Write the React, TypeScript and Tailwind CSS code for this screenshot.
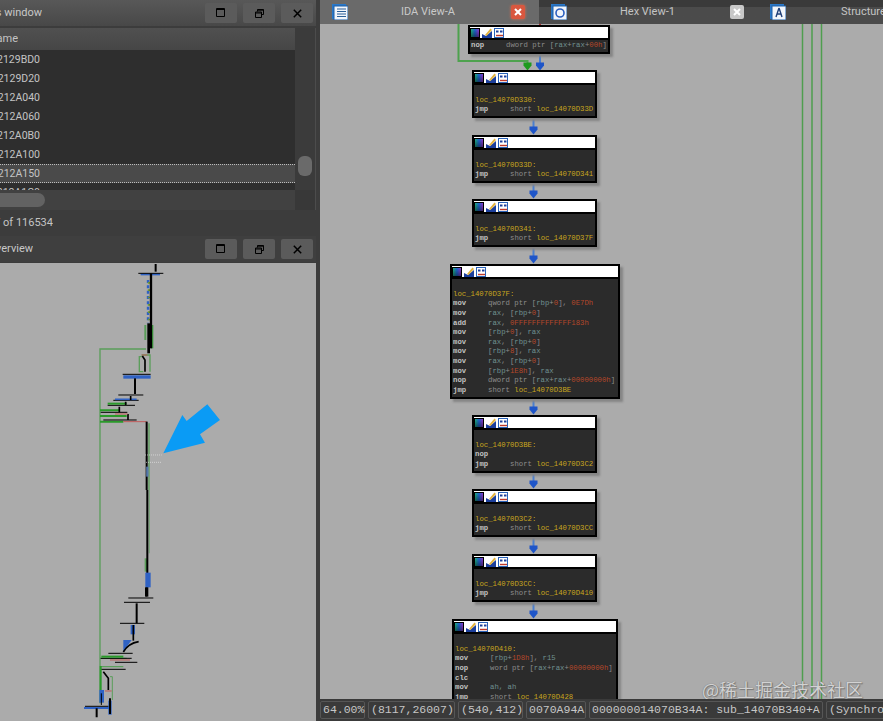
type Seg = [string, string];

const LABEL = "text-[#c9a61e]";
const OP = "text-[#c2c2c2] font-bold";
const GRAY = "text-[#8c8c8c]";
const REG = "text-[#6f9090]";
const NUM = "text-[#b5472a]";

const label = (name: string): Seg[] => [[name, LABEL]];
const jmp = (target: string): Seg[] => [
  ["jmp", OP],
  ["     short ", GRAY],
  [target, LABEL],
];

const mem = (op: string, inner: string, off: string, tail: Seg[]): Seg[] => [
  [op, OP],
  ["     [", GRAY],
  [inner, REG],
  ["+", GRAY],
  [off, NUM],
  ["], ", GRAY],
  ...tail,
];

const loadRax: Seg[] = [
  ["mov", OP],
  ["     ", GRAY],
  ["rax", REG],
  [", [", GRAY],
  ["rbp", REG],
  ["+", GRAY],
  ["0", NUM],
  ["]", GRAY],
];

const blankLine: Seg[] = [[" ", GRAY]];

type BlockProps = {
  lines: Seg[][];
  className: string;
};

const BlockIcons = () => (
  <div className="flex items-center gap-[2px]">
    <svg width="10" height="10" viewBox="0 0 10 10">
      <defs>
        <linearGradient id="rainbow" x1="0" y1="0" x2="1" y2="0">
          <stop offset="0" stopColor="#22d070" />
          <stop offset="0.5" stopColor="#1f6ae0" />
          <stop offset="1" stopColor="#b830d8" />
        </linearGradient>
        <linearGradient id="shade" x1="0" y1="0" x2="0" y2="1">
          <stop offset="0" stopColor="#000" stopOpacity="0" />
          <stop offset="1" stopColor="#000" stopOpacity="0.55" />
        </linearGradient>
      </defs>
      <rect x="0" y="0" width="10" height="10" fill="url(#rainbow)" />
      <rect x="0" y="0" width="10" height="10" fill="url(#shade)" />
      <rect x="0.5" y="0.5" width="9" height="9" fill="none" stroke="#000" />
    </svg>
    <svg width="10" height="10" viewBox="0 0 10 10">
      <path d="M0 10V6L4 8 10 3V10Z" fill="#1c3f9c" />
      <path d="M3 7 8.5 0.5 10 2 4.5 8Z" fill="#e3b23c" />
    </svg>
    <svg width="10" height="10" viewBox="0 0 10 10">
      <rect x="0.5" y="0.5" width="9" height="9" fill="#fff" stroke="#2a62b8" />
      <rect x="2" y="2.5" width="2.5" height="2" fill="#1c3f9c" />
      <rect x="6" y="2.5" width="2.5" height="2" fill="#1c3f9c" />
      <path d="M2 7.5H9" stroke="#c0392b" strokeWidth="1.4" />
    </svg>
  </div>
);

const Block = ({ lines, className }: BlockProps) => (
  <div className={`absolute border-2 border-black bg-[#2b2b2b] shadow-[3px_3px_2px_#858585] ${className}`}>
    <div className="flex h-[11px] items-center bg-white">
      <BlockIcons />
    </div>
    <div className="border-t-2 border-black pb-[1px] pl-[1px] pt-[1px] font-['Liberation_Mono',monospace] text-[7.3px] leading-[9.63px]">
      {lines.map((line, i) => (
        <div key={i} className="h-[9.63px] overflow-hidden whitespace-pre">
          {line.map(([text, color], j) => (
            <span key={j} className={color}>
              {text}
            </span>
          ))}
        </div>
      ))}
    </div>
  </div>
);

const WindowButtons = () => (
  <div className="flex gap-[6px]">
    <button className="flex h-[20px] w-[32px] items-center justify-center rounded-[2px] bg-[#5b5b5b]">
      <svg width="10" height="10" viewBox="0 0 10 10" fill="none" stroke="#000">
        <path d="M.5.5h8v8h-8z" />
        <path d="M.5 1.5h8" />
      </svg>
    </button>
    <button className="flex h-[20px] w-[32px] items-center justify-center rounded-[2px] bg-[#5b5b5b]">
      <svg width="9" height="9" viewBox="0 0 9 9" fill="none" stroke="#000">
        <path d="M2.5 2.5V.5h6v5h-2" />
        <path d="M.5 3h6v5.5h-6z" />
        <path d="M.5 4h6M2.5 1.2h6" />
      </svg>
    </button>
    <button className="flex h-[20px] w-[32px] items-center justify-center rounded-[2px] bg-[#5b5b5b]">
      <svg width="9" height="9" viewBox="0 0 9 9" fill="none" stroke="#000" strokeWidth="1.5">
        <path d="M.8.8l7.4 7.4M8.2.8L.8 8.2" />
      </svg>
    </button>
  </div>
);

const PanelHeader = ({ title, width, bar }: { title: string; width: string; bar: string }) => (
  <div className={`flex h-[26px] shrink-0 items-center justify-between pr-[3px] ${bar}`}>
    <div className={`flex justify-end overflow-hidden whitespace-nowrap text-[11px] text-[#c8c8c8] ${width}`}>
      <span className="shrink-0">{title}</span>
    </div>
    <WindowButtons />
  </div>
);

const rows = ["129BD0", "129D20", "12A040", "12A060", "12A0B0", "12A100", "12A150", "12A1C0"];

const FunctionsTable = () => (
  <div className="relative mt-[2px] h-[182px] w-[316px] shrink-0 overflow-hidden border-r border-[#4c4c4c] bg-[#2e2e2e] text-[10.5px] text-[#c4c4c4]">
    <div className="flex h-[22px] items-center bg-gradient-to-b from-[#505050] to-[#464646]">
      <div className="flex w-[18px] justify-end overflow-hidden whitespace-nowrap text-[11px]">
        <span className="shrink-0">Function name</span>
      </div>
    </div>
    <div className="h-[140px] w-[295px] overflow-hidden">
      {rows.map((row, i) => (
        <div
          key={row}
          className={
            i === 6
              ? "flex h-[19px] w-[295px] items-center border-y border-dotted border-[#bdbdbd] bg-[#4a4a4a]"
              : "flex h-[19px] w-[295px] items-center"
          }
        >
          <div className="flex w-[40px] justify-end overflow-hidden whitespace-nowrap">
            <span className="shrink-0">sub_142{row}</span>
          </div>
        </div>
      ))}
    </div>
    {/* vertical scrollbar */}
    <div className="absolute bottom-0 right-0 top-0 w-[20px] bg-[#3b3b3b]">
      <div className="absolute left-[3px] top-[128px] h-[20px] w-[14px] rounded-[6px] bg-[#6a6a6a]" />
    </div>
    {/* horizontal scrollbar */}
    <div className="absolute bottom-0 left-0 h-[20px] w-[295px] bg-[#414141]">
      <div className="absolute left-0 top-[3px] h-[14px] w-[45px] rounded-r-[7px] bg-[#626262]" />
    </div>
    <div className="absolute bottom-0 right-0 h-[20px] w-[20px] bg-[#383838]" />
  </div>
);

const Overview = () => (
  <div className="relative w-[316px] flex-1 overflow-hidden bg-[#ababab]">
    <svg className="absolute inset-0" width="316" height="458" viewBox="0 263 316 458" fill="none">
      <g transform="translate(60 260) scale(0.3333)">
        <path d="M258 267H120V690" stroke="#5a9e5a" strokeWidth="4" />
        <path d="M276 195V265" stroke="#3fa03f" strokeWidth="8" />
        <path d="M256 195V240" stroke="#5a9e5a" strokeWidth="6" />
        <path d="M287 12V35" stroke="#000" strokeWidth="6" />
        <path d="M242 43H300" stroke="#2f62c4" strokeWidth="6" />
        <path d="M235 40H310" stroke="#000" strokeWidth="3" />
        <path d="M264 60V190" stroke="#2f62c4" strokeWidth="7" strokeDasharray="9 7" />
        <path d="M267 66V185" stroke="#6f9a30" strokeWidth="7" strokeDasharray="5 17" />
        <path d="M273 40V265" stroke="#000" strokeWidth="7" />
        <path d="M266 190V280" stroke="#000" strokeWidth="8" />
        <path d="M245 285H270V335M245 290H238V335H250" stroke="#5a9e5a" strokeWidth="4" />
        <path d="M245 285H262" stroke="#c05a5a" strokeWidth="3" />
        <path d="M247 288 255 300V335" stroke="#000" strokeWidth="5" />
        <path d="M190 351H272" stroke="#2f62c4" strokeWidth="10" />
        <path d="M188 343H272" stroke="#000" strokeWidth="3" />
        <path d="M225 355V402" stroke="#000" strokeWidth="6" />
        <path d="M175 405H250M160 421H236M143 436H225" stroke="#000" strokeWidth="3" />
        <path d="M165 418H230" stroke="#2f62c4" strokeWidth="5" />
        <path d="M143 431H200" stroke="#2a9a2a" strokeWidth="6" />
        <path d="M120 451H180M120 468H200M120 485H190" stroke="#2a9a2a" strokeWidth="6" />
        <path d="M122 457H202M130 480H230" stroke="#000" strokeWidth="3" />
        <path d="M212 408V420M197 425V435M178 440V457M204 462V480" stroke="#000" strokeWidth="5" />
        <path d="M165 462H203M190 485H260" stroke="#c05a5a" strokeWidth="3" />
        <path d="M267 490V690" stroke="#5a9e5a" strokeWidth="4" />
        <path d="M260 485V690" stroke="#000" strokeWidth="6" />
        <path d="M262 620V650" stroke="#5577aa" strokeWidth="7" />
        <path d="M255 585H305M258 607H305" stroke="#e8e8e8" strokeWidth="2" strokeDasharray="3 3" />
        <path d="M310 580 367 465 380 483 442 433 480 480 420 523 435 548Z" fill="#0a9bf5" />
      </g>
      <g transform="translate(60 490) scale(0.3333)">
        <path d="M120 0V640M120 505H200M120 530H190" stroke="#5a9e5a" strokeWidth="4" />
        <path d="M268 0V190" stroke="#7ea57e" strokeWidth="4" />
        <path d="M258 205V245" stroke="#5a9e5a" strokeWidth="8" />
        <path d="M262 0V320" stroke="#000" strokeWidth="6" />
        <rect x="256" y="248" width="16" height="44" fill="#2f62c4" />
        <path d="M258 292V320" stroke="#000" strokeWidth="6" />
        <path d="M205 324H280M192 337H270" stroke="#000" strokeWidth="3" />
        <path d="M230 340V400" stroke="#000" strokeWidth="6" />
        <path d="M180 400H253" stroke="#000" strokeWidth="3" />
        <rect x="212" y="405" width="13" height="28" fill="#2f62c4" />
        <path d="M220 405V452" stroke="#000" strokeWidth="5" />
        <path d="M190 450H215L190 485Z" fill="#2f62c4" />
        <path d="M236 455Q205 460 190 486" stroke="#000" strokeWidth="5" />
        <path d="M145 490H218M122 505H215M165 517H232M122 538H197" stroke="#000" strokeWidth="3" />
        <path d="M124 500H190" stroke="#2a9a2a" strokeWidth="6" />
        <path d="M150 510H210" stroke="#c05a5a" strokeWidth="3" />
        <path d="M122 528V600" stroke="#2a9a2a" strokeWidth="6" />
        <path d="M130 545 145 565V600" stroke="#000" strokeWidth="5" />
        <path d="M150 560H157V630" stroke="#5a9e5a" strokeWidth="3" />
        <rect x="118" y="600" width="14" height="38" fill="#2f62c4" />
        <path d="M124 610V645" stroke="#000" strokeWidth="3" />
        <path d="M135 603H155" stroke="#c05a5a" strokeWidth="3" />
        <path d="M72 654H150" stroke="#2f62c4" strokeWidth="6" />
        <path d="M75 649H150" stroke="#000" strokeWidth="3" />
        <rect x="145" y="632" width="10" height="42" fill="#2f62c4" />
        <path d="M150 625V672M110 655V682" stroke="#000" strokeWidth="6" />
      </g>
    </svg>
  </div>
);

const DocIcon = ({ kind }: { kind: "list" | "hex" | "struct" }) => (
  <svg width="16" height="16" viewBox="0 0 16 16">
    <rect x="0" y="0" width="14" height="15" fill="#2a78c8" />
    <rect x="2" y="2" width="14" height="14" fill="#f2f6fb" stroke="#1c5fa8" />
    {kind === "list" && <path d="M5 5H14M5 7.5H14M5 10H14M5 12.5H14" stroke="#2a5f98" />}
    {kind === "hex" && <circle cx="9" cy="9" r="4" fill="none" stroke="#2a5fc0" strokeWidth="1.6" />}
    {kind === "struct" && <path d="M9 4 6 13M9 4 12 13M7 10H11" fill="none" stroke="#1f3f78" strokeWidth="1.4" />}
  </svg>
);

const CloseIcon = ({ active }: { active: boolean }) => (
  <div
    className={
      active
        ? "flex h-[14px] w-[14px] items-center justify-center rounded-[2px] bg-[#d9573f] shadow-[0_0_3px_#e07050]"
        : "flex h-[14px] w-[14px] items-center justify-center rounded-[2px] bg-[#c8c8c8]"
    }
  >
    <svg width="8" height="8" viewBox="0 0 8 8" stroke="#fff" strokeWidth="2">
      <path d="M1 1l6 6M7 1L1 7" />
    </svg>
  </div>
);

const Tabs = () => (
  <div className="flex h-[24px] shrink-0 overflow-hidden bg-gradient-to-b from-[#3a3a3a] from-30% to-[#4b4b4b] to-30% text-[11px]">
    <div className="flex w-[219px] shrink-0 items-center bg-[#6a6a6a] pl-[12px] text-[#c9c9c9]">
      <DocIcon kind="list" />
      <span className="ml-[53px]">IDA View-A</span>
      <span className="ml-[56px]">
        <CloseIcon active />
      </span>
    </div>
    <div className="flex w-[231px] shrink-0 items-center pl-[12px] text-[#c4c4c4]">
      <DocIcon kind="hex" />
      <span className="ml-[53px]">Hex View-1</span>
      <span className="ml-[55px]">
        <CloseIcon active={false} />
      </span>
    </div>
    <div className="flex shrink-0 items-center text-[#c4c4c4]">
      <DocIcon kind="struct" />
      <span className="ml-[55px] whitespace-nowrap">Structures</span>
    </div>
  </div>
);

const GraphEdges = () => (
  <svg className="absolute inset-0" width="563" height="675" viewBox="320 24 563 675" fill="none">
    <path d="M458.5 24V61H527.5V64" stroke="#4ea24e" strokeWidth="2" />
    <path d="M523.5 62.5h8v3l-4 5-4-5z" fill="#1e9a1e" />
    <path d="M802.5 24V699M812 24V699M821.5 24V699" stroke="#4f9e4f" strokeWidth="1.5" />
    <path d="M540 24V26" stroke="#b03030" strokeWidth="2" />
    <path d="M540 52V66" stroke="#4a7fd0" strokeWidth="2" />
    <path d="M536 62.5h8v3l-4 5-4-5z" fill="#1e55c8" />
    {[116, 180, 245, 396, 470, 535, 600].map((y) => (
      <g key={y}>
        <path d={`M533.5 ${y}V${y + 13}`} stroke="#4a7fd0" strokeWidth="2" />
        <path d={`M529.5 ${y + 10.5}h8v3l-4 5-4-5z`} fill="#1e55c8" />
      </g>
    ))}
  </svg>
);

const statusCells = [
  { text: "64.00%", width: "w-[45px]" },
  { text: "(8117,26007)", width: "w-[87px]" },
  { text: "(540,412)", width: "w-[65px]" },
  { text: "0070A94A", width: "w-[60px]" },
  { text: "000000014070B34A: sub_14070B340+A", width: "w-[234px]" },
  { text: "(Synchronized with Hex View-1)", width: "w-[240px]" },
];

const StatusBar = () => (
  <div className="flex h-[22px] shrink-0 items-center gap-[3px] overflow-hidden bg-[#3a3a3a] font-['Liberation_Mono',monospace] text-[11.5px] text-[#c6c6c6]">
    {statusCells.map((cell) => (
      <div
        key={cell.text}
        className={`flex h-[18px] shrink-0 items-center whitespace-nowrap rounded-[2px] border border-[#565656] pl-[2px] ${cell.width}`}
      >
        {cell.text}
      </div>
    ))}
  </div>
);

const App = () => {
  return (
    <div className="flex h-[721px] w-[883px] overflow-hidden bg-[#3c3c3c] font-['Roboto',sans-serif]">
      <div className="flex w-[316px] shrink-0 flex-col">
        <PanelHeader title="Functions window" width="w-[42px]" bar="bg-gradient-to-b from-[#585858] to-[#484848]" />
        <FunctionsTable />
        <div className="flex h-[26px] shrink-0 items-center text-[11px] text-[#c4c4c4]">
          <div className="flex w-[53px] justify-end overflow-hidden whitespace-nowrap">
            <span className="shrink-0">Line 7 of 116534</span>
          </div>
        </div>
        <PanelHeader title="Graph overview" width="w-[33px]" bar="bg-[#3f3f3f]" />
        <div className="h-[1px] shrink-0" />
        <Overview />
      </div>
      <div className="ml-[4px] flex min-w-0 flex-1 flex-col">
        <Tabs />
        <div className="relative flex-1 overflow-hidden bg-[#ababab]">
          <GraphEdges />
          <Block
            className="left-[148px] top-[1px] w-[142px]"
            lines={[
              [
                ["nop", OP],
                ["     dword ptr [", GRAY],
                ["rax", REG],
                ["+", GRAY],
                ["rax", REG],
                ["+", GRAY],
                ["00h", NUM],
                ["]", GRAY],
              ],
            ]}
          />
          <Block
            className="left-[152px] top-[46px] w-[125px]"
            lines={[blankLine, label("loc_14070D330:"), jmp("loc_14070D33D")]}
          />
          <Block
            className="left-[152px] top-[111px] w-[125px]"
            lines={[blankLine, label("loc_14070D33D:"), jmp("loc_14070D341")]}
          />
          <Block
            className="left-[152px] top-[175px] w-[125px]"
            lines={[blankLine, label("loc_14070D341:"), jmp("loc_14070D37F")]}
          />
          <Block
            className="left-[130px] top-[240px] w-[170px]"
            lines={[
              blankLine,
              label("loc_14070D37F:"),
              [
                ["mov", OP],
                ["     qword ptr [", GRAY],
                ["rbp", REG],
                ["+", GRAY],
                ["0", NUM],
                ["], ", GRAY],
                ["0E7Dh", NUM],
              ],
              loadRax,
              [
                ["add", OP],
                ["     ", GRAY],
                ["rax", REG],
                [", ", GRAY],
                ["0FFFFFFFFFFFFF183h", NUM],
              ],
              mem("mov", "rbp", "0", [["rax", REG]]),
              loadRax,
              mem("mov", "rbp", "8", [["rax", REG]]),
              loadRax,
              mem("mov", "rbp", "1E8h", [["rax", REG]]),
              [
                ["nop", OP],
                ["     dword ptr [", GRAY],
                ["rax", REG],
                ["+", GRAY],
                ["rax", REG],
                ["+", GRAY],
                ["00000000h", NUM],
                ["]", GRAY],
              ],
              jmp("loc_14070D3BE"),
            ]}
          />
          <Block
            className="left-[152px] top-[391px] w-[125px]"
            lines={[blankLine, label("loc_14070D3BE:"), [["nop", OP]], jmp("loc_14070D3C2")]}
          />
          <Block
            className="left-[152px] top-[465px] w-[125px]"
            lines={[blankLine, label("loc_14070D3C2:"), jmp("loc_14070D3CC")]}
          />
          <Block
            className="left-[152px] top-[530px] w-[125px]"
            lines={[blankLine, label("loc_14070D3CC:"), jmp("loc_14070D410")]}
          />
          <Block
            className="left-[132px] top-[595px] w-[166px]"
            lines={[
              blankLine,
              label("loc_14070D410:"),
              mem("mov", "rbp", "1D8h", [["r15", REG]]),
              [
                ["nop", OP],
                ["     word ptr [", GRAY],
                ["rax", REG],
                ["+", GRAY],
                ["rax", REG],
                ["+", GRAY],
                ["00000000h", NUM],
                ["]", GRAY],
              ],
              [["clc", OP]],
              [
                ["mov", OP],
                ["     ", GRAY],
                ["ah, ah", REG],
              ],
              jmp("loc_14070D428"),
            ]}
          />
          <div className="absolute bottom-[1px] left-[382px] whitespace-nowrap font-['Noto_Sans_CJK_SC',sans-serif] text-[18px] leading-[18px] text-[#d2d2d2] [text-shadow:0_0_1px_#666,1px_1px_1px_#777]">
            @稀土掘金技术社区
          </div>
        </div>
        <StatusBar />
      </div>
    </div>
  );
};

export default App;
